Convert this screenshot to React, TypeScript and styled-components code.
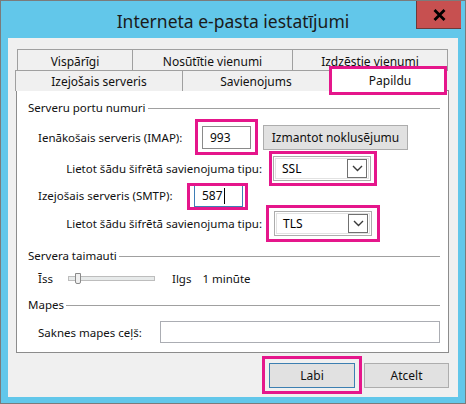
import React from "react";
import styled, { createGlobalStyle, css } from "styled-components";

const PINK = "#e5168b";
const FONT = `"Noto Sans", "Open Sans", sans-serif`;

const Global = createGlobalStyle`
  html, body { margin: 0; padding: 0; background: #ffffff; }
  * { box-sizing: border-box; }
  body { font-family: ${FONT}; font-size: 11.5px; color: #000; }
`;

const Window = styled.div`
  width: 466px;
  height: 404px;
  border: 1px solid #7b7b7b;
  background: #62c7ea;
  display: flex;
  flex-direction: column;
`;

const TitleBar = styled.div`
  height: 37px;
  display: grid;
  grid-template-columns: 1fr auto 1fr;
  align-items: center;
`;

const Title = styled.div`
  grid-column: 2;
  font-size: 17.5px;
  color: #1b1b1b;
  padding-top: 3px;
`;

const CloseButton = styled.div`
  grid-column: 3;
  justify-self: end;
  align-self: start;
  margin-right: 4px;
  width: 45px;
  height: 28px;
  background: #c75050;
  border-left: 1px solid #6d3a3a;
  border-bottom: 1px solid #6d3a3a;
  display: flex;
  align-items: center;
  justify-content: center;
`;

const Client = styled.div`
  flex: 1;
  margin: 0 7px 6px 7px;
  background: #f0f0f0;
  padding: 11px 9px 9px 8px;
  display: flex;
  flex-direction: column;
`;

const TabRow = styled.div<{ $first?: boolean }>`
  display: flex;
  height: ${(p) => (p.$first ? 22 : 21)}px;
  margin-left: ${(p) => (p.$first ? 2 : 0)}px;
  margin-top: ${(p) => (p.$first ? 0 : -1)}px;
  position: relative;
  z-index: ${(p) => (p.$first ? 0 : 1)};
`;

const Tab = styled.div<{ $w: number; $selected?: boolean }>`
  flex: 0 0 ${(p) => p.$w}px;
  display: flex;
  align-items: center;
  justify-content: center;
  border: 1px solid #a0a0a0;
  border-bottom: none;
  margin-left: -1px;
  background: #f0f0f0;
  font-size: 12px;
  color: #111;
  padding-top: 1px;
  ${(p) =>
    p.$selected &&
    css`
      background: #ffffff;
      border: 3px solid ${PINK};
      margin-top: -4px;
      margin-bottom: -4px;
      height: 29px;
      position: relative;
      z-index: 2;
      padding-top: 0;
      padding-left: 4px;
    `}
`;

const Panel = styled.div`
  background: #ffffff;
  border: 1px solid #8c8c8c;
  height: 263px;
  margin-top: -1px;
  padding: 8px 8px 0 11px;
  display: flex;
  flex-direction: column;
`;

const GroupHeader = styled.div<{ $mt: number }>`
  display: flex;
  align-items: center;
  height: 16px;
  margin-top: ${(p) => p.$mt}px;
  color: #111;
  white-space: nowrap;
  &::after {
    content: "";
    flex: 1;
    height: 0;
    border-top: 1px solid #a0a0a0;
    margin-left: 2px;
    margin-top: 2px;
  }
`;

const Row = styled.div<{ $mt: number; $h: number }>`
  display: flex;
  align-items: center;
  height: ${(p) => p.$h}px;
  margin-top: ${(p) => p.$mt}px;
  padding-left: 10px;
  white-space: nowrap;
`;

const Label = styled.span<{ $w?: number; $right?: boolean; $ml?: number }>`
  display: inline-block;
  ${(p) => p.$w && css`width: ${p.$w}px; flex: 0 0 ${p.$w}px;`}
  margin-left: ${(p) => p.$ml ?? 0}px;
  text-align: ${(p) => (p.$right ? "right" : "left")};
  color: #111;
`;

const Highlight = styled.div<{ $t: number; $r: number; $b: number; $l: number; $ml?: number }>`
  position: relative;
  display: flex;
  margin-left: ${(p) => p.$ml ?? 0}px;
  &::after {
    content: "";
    position: absolute;
    top: ${(p) => -p.$t}px;
    right: ${(p) => -p.$r}px;
    bottom: ${(p) => -p.$b}px;
    left: ${(p) => -p.$l}px;
    border: 3px solid ${PINK};
    pointer-events: none;
  }
`;

const TextBox = styled.div<{ $w: number; $h: number; $focus?: boolean; $light?: boolean }>`
  width: ${(p) => p.$w}px;
  height: ${(p) => p.$h}px;
  border: 1px solid ${(p) => (p.$focus ? "#3e7db6" : p.$light ? "#abadb3" : "#8a8a8a")};
  background: #ffffff;
  display: flex;
  align-items: center;
  padding-left: 7px;
  font-size: 12px;
  color: #0a0a0a;
`;

const Caret = styled.span`
  display: inline-block;
  width: 1px;
  height: 16px;
  background: #000;
  margin-left: 1px;
`;

const PushButton = styled.div<{ $w: number; $default?: boolean; $ml?: number }>`
  width: ${(p) => p.$w}px;
  height: 25px;
  margin-left: ${(p) => p.$ml ?? 0}px;
  background: #e1e1e1;
  border: 1px solid ${(p) => (p.$default ? "#3c7fb1" : "#adadad")};
  display: flex;
  align-items: center;
  justify-content: center;
  font-size: 12px;
  color: #111;
`;

const Select = styled.div`
  width: 98px;
  height: 25px;
  border: 1px solid #acacac;
  background: #ffffff;
  padding: 1px;
  display: flex;
`;

const SelectInner = styled.div`
  flex: 1;
  border: 1px solid #e2e2e2;
  display: flex;
  align-items: center;
  justify-content: space-between;
  padding-left: 6px;
  padding-right: 1px;
  font-size: 12px;
`;

const DropArrow = styled.div`
  width: 20px;
  height: 19px;
  border: 1px solid #707070;
  display: flex;
  align-items: center;
  justify-content: center;
`;

const SliderTrack = styled.div`
  width: 87px;
  height: 5px;
  background: #e7eaea;
  border: 1px solid #bdbdbd;
  position: relative;
`;

const SliderThumb = styled.div`
  position: absolute;
  left: 6px;
  top: -4px;
  width: 6px;
  height: 11px;
  background: #f0f0f0;
  border: 1px solid #8a8a8a;
  border-radius: 0 0 2px 2px;
`;

const ButtonBar = styled.div`
  margin-top: 10px;
  display: flex;
  justify-content: flex-end;
  gap: 9px;
`;

const Chevron = () => (
  <svg width="11" height="7" viewBox="0 0 11 7">
    <path d="M1 1 L5.5 5.5 L10 1" fill="none" stroke="#3a3a3a" strokeWidth="1.4" />
  </svg>
);

const Dropdown = ({ value }: { value: string }) => (
  <Select>
    <SelectInner>
      {value}
      <DropArrow>
        <Chevron />
      </DropArrow>
    </SelectInner>
  </Select>
);

export default function App() {
  return (
    <>
      <Global />
      <Window>
        <TitleBar>
          <Title>Interneta e-pasta iestatījumi</Title>
          <CloseButton>
            <svg width="13" height="12" viewBox="0 0 13 12">
              <path d="M1.5 1 L11.5 11 M11.5 1 L1.5 11" stroke="#000" strokeWidth="2.8" />
            </svg>
          </CloseButton>
        </TitleBar>
        <Client>
          <TabRow $first>
            <Tab $w={116}>Vispārīgi</Tab>
            <Tab $w={161}>Nosūtītie vienumi</Tab>
            <Tab $w={156}>Izdzēstie vienumi</Tab>
          </TabRow>
          <TabRow>
            <Tab $w={168}>Izejošais serveris</Tab>
            <Tab $w={148}>Savienojums</Tab>
            <Tab $w={118} $selected>
              Papildu
            </Tab>
          </TabRow>
          <Panel>
            <GroupHeader $mt={0}>Serveru portu numuri</GroupHeader>
            <Row $mt={10} $h={25}>
              <Label $w={164}>Ienākošais serveris (IMAP):</Label>
              <Highlight $t={7} $r={7} $b={6} $l={7}>
                <TextBox $w={49} $h={23}>993</TextBox>
              </Highlight>
              <PushButton $w={145} $ml={12}>
                Izmantot noklusējumu
              </PushButton>
            </Row>
            <Row $mt={6} $h={25}>
              <Label $w={224} $right>
                Lietot šādu šifrētā savienojuma tipu:
              </Label>
              <Highlight $t={5} $r={6} $b={5} $l={4} $ml={11}>
                <Dropdown value="SSL" />
              </Highlight>
            </Row>
            <Row $mt={3} $h={23}>
              <Label $w={156}>Izejošais serveris (SMTP):</Label>
              <Highlight $t={1} $r={5} $b={3} $l={7}>
                <TextBox $w={49} $h={23} $focus>
                  587
                  <Caret />
                </TextBox>
              </Highlight>
            </Row>
            <Row $mt={4} $h={25}>
              <Label $w={224} $right>
                Lietot šādu šifrētā savienojuma tipu:
              </Label>
              <Highlight $t={6} $r={8} $b={6} $l={8} $ml={12}>
                <Dropdown value="TLS" />
              </Highlight>
            </Row>
            <GroupHeader $mt={11}>Servera taimauti</GroupHeader>
            <Row $mt={7} $h={16}>
              <Label $w={30}>Īss</Label>
              <SliderTrack>
                <SliderThumb />
              </SliderTrack>
              <Label $ml={17}>Ilgs</Label>
              <Label $ml={11}>1 minūte</Label>
            </Row>
            <GroupHeader $mt={10}>Mapes</GroupHeader>
            <Row $mt={9} $h={22}>
              <Label $w={122}>Saknes mapes ceļš:</Label>
              <TextBox $w={280} $h={22} $light />
            </Row>
          </Panel>
          <ButtonBar>
            <Highlight $t={7} $r={7} $b={6} $l={7}>
              <PushButton $w={86} $default>
                Labi
              </PushButton>
            </Highlight>
            <PushButton $w={85}>Atcelt</PushButton>
          </ButtonBar>
        </Client>
      </Window>
    </>
  );
}
